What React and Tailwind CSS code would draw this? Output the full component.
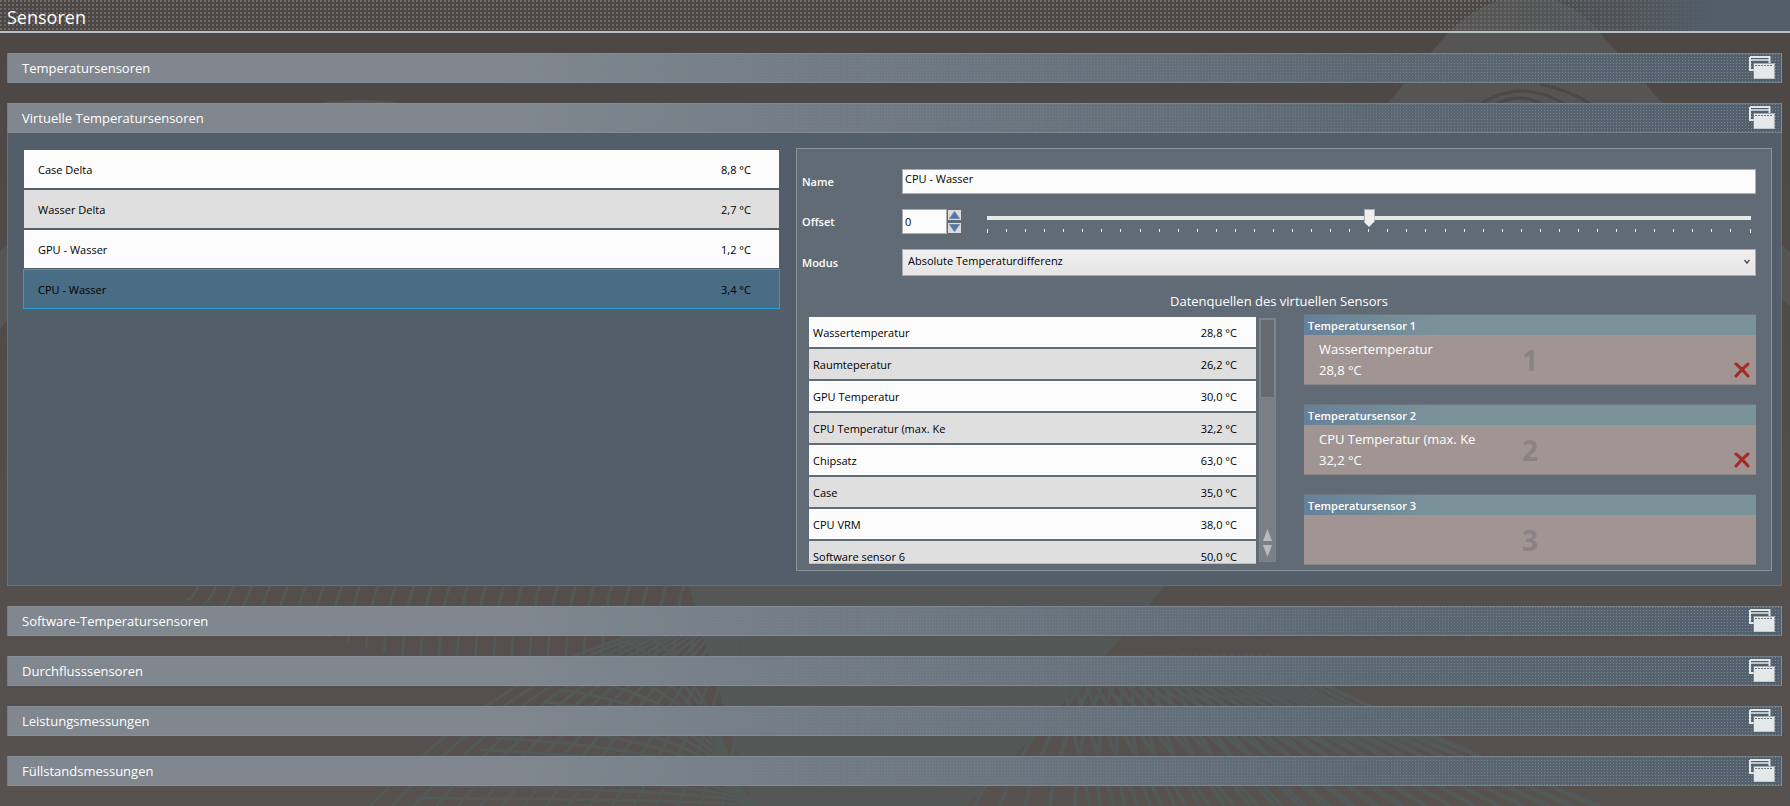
import { useState } from "react";

const virtualSensors = [
  { name: "Case Delta", value: "8,8 °C" },
  { name: "Wasser Delta", value: "2,7 °C" },
  { name: "GPU - Wasser", value: "1,2 °C" },
  { name: "CPU - Wasser", value: "3,4 °C" },
];

const sources = [
  { name: "Wassertemperatur", value: "28,8 °C" },
  { name: "Raumteperatur", value: "26,2 °C" },
  { name: "GPU Temperatur", value: "30,0 °C" },
  { name: "CPU Temperatur (max. Ke", value: "32,2 °C" },
  { name: "Chipsatz", value: "63,0 °C" },
  { name: "Case", value: "35,0 °C" },
  { name: "CPU VRM", value: "38,0 °C" },
  { name: "Software sensor 6", value: "50,0 °C" },
];

const slots = [
  { id: 1, name: "Wassertemperatur", value: "28,8 °C" },
  { id: 2, name: "CPU Temperatur (max. Ke", value: "32,2 °C" },
  { id: 3 },
];

const range = (n) => Array.from({ length: n }, (_, i) => i);

const Backdrop = () => (
  <svg
    className="absolute inset-0 -z-10 h-full w-full"
    viewBox="0 0 1790 806"
    preserveAspectRatio="xMidYMin slice"
    aria-hidden="true"
  >
    <g fill="#545554">
      <path d="M1385 106 L1448 33 Q1480 0 1525 -6 Q1575 0 1600 33 L1665 106 Z" />
      <path d="M300 106 Q360 94 420 106 Z" />
      <path d="M0 250 L7 246 V320 L0 330 Z" />
      <path d="M1782 245 L1790 252 V306 L1782 300 Z" />
      <path d="M689 586 H1165 Q1080 690 967 806 H752 Z" fill="#545756" />
    </g>
    <g fill="none" stroke="#4d4845" strokeWidth="3">
      <path d="M1478 106 Q1520 76 1568 106" />
      <path d="M1492 106 Q1520 90 1545 106" />
      <path d="M1540 84 Q1570 90 1594 106" />
    </g>
    <g fill="none" stroke="#535958" strokeWidth="3">
      {range(29).map((i) => (
        <path key={i} d={`M${198 + i * 18} 586 q-8 18 -12 ${Math.min(12 + i * 5, 100)}`} />
      ))}
      {range(17).map((i) => (
        <path key={i} d={`M${370 + i * 22} 806 Q${520 + i * 14} ${650 + i * 4} ${680 + i * 4} 625`} />
      ))}
      {range(15).map((i) => (
        <path key={i} d={`M${640 - i * 16} ${630 + i * 12} Q${700 + i * 2} ${660 + i * 10} ${745 + i} 806`} />
      ))}
    </g>
    <g fill="none" stroke="#535958" strokeWidth="4">
      {range(26).map((i) => (
        <path key={i} d={`M${975 + i * 25} 806 Q${1010 + i * 16} 730 ${1090 + i * 7} 655`} />
      ))}
      {range(22).map((i) => (
        <path key={i} d={`M${1090 + i * 24} 806 Q${1075 + i * 18} 740 ${1060 + i * 8} 665`} />
      ))}
    </g>
  </svg>
);

const WindowsIcon = () => (
  <svg className="-mt-0.5" width="26" height="23" viewBox="0 0 26 23" aria-hidden="true">
    <path d="M1 1 H20.500 V7 M1 1 V14 H5" fill="none" stroke="#e2e6e7" strokeWidth="2" />
    <path d="M1 4 H20" stroke="#e2e6e7" strokeWidth="1.500" />
    <rect x="4.500" y="7" width="21.500" height="16" fill="#a3abb1" />
    <rect x="5" y="8" width="20" height="14.500" fill="#e4e8e9" />
    <path d="M6 9.500 H24" stroke="#6d777f" strokeWidth="1" strokeDasharray="2 1" />
  </svg>
);

const SectionBar = ({ title, onToggle, open }) => (
  <h2>
    <button
      className="flex h-[30px] w-full items-center justify-between border border-[#88929a]/60 bg-[#51606c] bg-[linear-gradient(90deg,#80878f_28%,rgba(100,111,121,0.6)_75%,rgba(80,93,105,0.1)_100%),conic-gradient(from_270deg_at_1px_1px,#7f8e99_90deg,transparent_0)] bg-[length:100%_100%,3px_3px] pr-1.5 pl-3.5 text-left text-[13px] text-white"
      onClick={onToggle}
      aria-expanded={open}
    >
      <span className="pt-0.5">{title}</span>
      <WindowsIcon />
    </button>
  </h2>
);

const VirtualSensorList = ({ selected, onSelect }) => (
  <ul className="mt-px">
    {virtualSensors.map((sensor, i) => (
      <li key={sensor.name}>
        <button
          className={`flex h-10 w-full items-center justify-between border bg-clip-padding pt-0.5 pr-7 pl-3.5 text-[11px] ${
            selected === i
              ? "border-[#2d9bd5] bg-[#486d84]"
              : "border-transparent " + (i % 2 ? "bg-[#dfdfdf]" : "bg-[#fcfcfc]")
          }`}
          onClick={() => onSelect(i)}
        >
          <span>{sensor.name}</span>
          <span>{sensor.value}</span>
        </button>
      </li>
    ))}
  </ul>
);

const SourceList = () => (
  <ul className="mt-[3px] flex h-[247px] flex-col gap-0.5 overflow-hidden border-b border-[#b9bdc1]">
    {sources.map((source, i) => (
      <li
        key={source.name}
        className={`flex h-[30px] shrink-0 items-center justify-between pt-0.5 pr-[19px] pl-1 text-[11px] ${
          i % 2 ? "bg-[#dfdfdf]" : "bg-[#fcfcfc]"
        }`}
      >
        <span>{source.name}</span>
        <span>{source.value}</span>
      </li>
    ))}
  </ul>
);

const ScrollBar = () => (
  <div className="mt-1 flex h-[244px] flex-col items-center justify-between border border-[#7d848b] bg-[#7a7f87] pb-1">
    <div className="h-[79px] w-full border border-[#7d8288] bg-[#666b72]" />
    <svg width="9" height="28" viewBox="0 0 9 28" fill="#b3bbbf" aria-hidden="true">
      <path d="M4.500 0 L9 12 H0 Z" />
      <path d="M0 16 H9 L4.500 28 Z" />
    </svg>
  </div>
);

const SensorSlot = ({ slot }) => (
  <div className="h-[71px] border-y border-t-[#6d7780] border-b-[#8a8586]">
    <h4 className="h-5 bg-[linear-gradient(90deg,#66809a,#7a9399_30%)] pl-1 text-[11px] leading-[22px] font-semibold">
      {`Temperatursensor ${slot.id}`}
    </h4>
    <div className="relative flex h-[49px] items-center bg-[#a09593] pl-[15px] text-[13px] leading-[21px]">
      <span className="absolute inset-0 flex items-center justify-center pt-0.5 text-[28px] font-bold text-[#8b8283]">
        {slot.id}
      </span>
      {slot.name && (
        <>
          <div className="relative">
            <p>{slot.name}</p>
            <p>{slot.value}</p>
          </div>
          <button className="absolute right-1.5 bottom-1.5" aria-label="Entfernen">
            <svg width="16" height="16" viewBox="0 0 16 16" aria-hidden="true">
              <path d="M2 2 Q7 6 14 14 M14 2 Q8 7 2 14" fill="none" stroke="#a82a26" strokeWidth="3" strokeLinecap="round" />
            </svg>
          </button>
        </>
      )}
    </div>
  </div>
);

const SensorEditor = () => {
  const [name, setName] = useState("CPU - Wasser");
  const [offset, setOffset] = useState(0);

  return (
    <div className="border border-[#8a9499] bg-[#616b75] pt-5 pr-[15px] pb-[5px] pl-[5px] text-white">
      <div className="grid grid-cols-[100px_1fr] items-center gap-y-[15px]">
        <label htmlFor="name" className="pt-0.5 text-[11px] font-semibold">
          Name
        </label>
        <input
          id="name"
          className="h-[25px] w-full border border-[#abadb3] bg-[#fcfcfc] pb-1.5 pl-0.5 text-[11px] text-black"
          value={name}
          onChange={(e) => setName(e.target.value)}
        />

        <label htmlFor="offset" className="pt-0.5 text-[11px] font-semibold">
          Offset
        </label>
        <div className="flex h-[25px]">
          <input
            id="offset"
            className="h-[25px] w-[45px] border border-[#abadb3] bg-[#fcfcfc] pl-0.5 text-[11px] text-black"
            value={offset}
            onChange={(e) => setOffset(Number(e.target.value) || 0)}
          />
          <div className="ml-px flex flex-col justify-center gap-[3px]">
            <button
              className="flex h-2.5 w-[13px] items-center justify-center bg-[#dcdcdc]"
              onClick={() => setOffset(offset + 1)}
              aria-label="Erhöhen"
            >
              <svg width="11" height="8" viewBox="0 0 11 8" aria-hidden="true">
                <path d="M5.500 0.500 L10.500 7.500 H0.500 Z" fill="#4377c4" stroke="#7a8794" />
              </svg>
            </button>
            <button
              className="flex h-2.5 w-[13px] items-center justify-center bg-[#dcdcdc]"
              onClick={() => setOffset(offset - 1)}
              aria-label="Verringern"
            >
              <svg width="11" height="8" viewBox="0 0 11 8" aria-hidden="true">
                <path d="M0.500 0.500 H10.500 L5.500 7.500 Z" fill="#4377c4" stroke="#7a8794" />
              </svg>
            </button>
          </div>
          <div className="mr-[5px] ml-[26px] flex flex-1 flex-col gap-0.5">
            <input
              type="range"
              min="-20"
              max="20"
              value={offset}
              onChange={(e) => setOffset(Number(e.target.value))}
              aria-label="Offset"
              className="h-[18px] w-full appearance-none bg-[linear-gradient(#e7eaea,#e7eaea)] bg-[length:100%_4px] bg-center bg-no-repeat [&::-webkit-slider-thumb]:h-[18px] [&::-webkit-slider-thumb]:w-[11px] [&::-webkit-slider-thumb]:appearance-none [&::-webkit-slider-thumb]:border [&::-webkit-slider-thumb]:border-[#acacac] [&::-webkit-slider-thumb]:bg-[#f0f0f0] [&::-webkit-slider-thumb]:[clip-path:polygon(0_0,100%_0,100%_70%,50%_100%,0_70%)]"
            />
            <div className="flex h-1 justify-between">
              {range(41).map((i) => (
                <span key={i} className="h-[3px] w-px bg-[#e7eaea] first:h-1 last:h-1" />
              ))}
            </div>
          </div>
        </div>

        <label htmlFor="mode" className="pt-0.5 text-[11px] font-semibold">
          Modus
        </label>
        <div className="relative">
          <select
            id="mode"
            className="block h-[27px] w-full appearance-none border border-[#acacac] bg-linear-to-b from-[#f0f0f0] to-[#e5e5e5] pb-0.5 pl-[5px] text-[11px] text-black"
          >
            <option>Absolute Temperaturdifferenz</option>
          </select>
          <svg
            className="pointer-events-none absolute top-2.5 right-1.5"
            width="6"
            height="6"
            viewBox="0 0 6 6"
            aria-hidden="true"
          >
            <path d="M0.500 1 L3 4 L5.500 1" fill="none" stroke="#555" strokeWidth="1.500" />
          </svg>
        </div>
      </div>

      <h3 className="mt-3.5 h-6 text-center text-[13px] leading-[22px]">Datenquellen des virtuellen Sensors</h3>
      <div className="grid grid-cols-[447fr_17px_477fr] gap-[3px] pl-[7px]">
        <div className="text-black">
          <SourceList />
        </div>
        <ScrollBar />
        <div className="ml-[25px] flex flex-col gap-[19px]">
          {slots.map((slot) => (
            <SensorSlot key={slot.id} slot={slot} />
          ))}
        </div>
      </div>
    </div>
  );
};

const App = () => {
  const [selected, setSelected] = useState(3);
  const [open, setOpen] = useState(true);

  return (
    <div className="relative isolate min-h-screen overflow-hidden bg-linear-to-b from-[#4c4744] to-[#57514f] font-['Open_Sans',sans-serif]">
      <Backdrop />
      <header className="h-[33px] border-b-2 border-[#b4c0c2] bg-[linear-gradient(90deg,transparent_84%,#525e69_96%),conic-gradient(from_270deg_at_2px_2px,#6b6968_90deg,transparent_0)] bg-[length:100%_100%,4px_4px] pl-[7px]">
        <h1 className="text-[18px] leading-[34px] text-white">Sensoren</h1>
      </header>
      <main className="flex flex-col gap-5 pt-5 pr-2 pb-5 pl-[7px]">
        <SectionBar title="Temperatursensoren" open={false} />
        <section>
          <SectionBar title="Virtuelle Temperatursensoren" open={open} onToggle={() => setOpen(!open)} />
          {open && (
            <div className="grid grid-cols-[757fr_976fr] gap-4 border border-t-0 border-[#66717a] bg-[#525e69] pt-[15px] pr-[9px] pb-3.5 pl-[15px]">
              <VirtualSensorList selected={selected} onSelect={setSelected} />
              <SensorEditor />
            </div>
          )}
        </section>
        <SectionBar title="Software-Temperatursensoren" open={false} />
        <SectionBar title="Durchflusssensoren" open={false} />
        <SectionBar title="Leistungsmessungen" open={false} />
        <SectionBar title="Füllstandsmessungen" open={false} />
      </main>
    </div>
  );
};

export default App;
